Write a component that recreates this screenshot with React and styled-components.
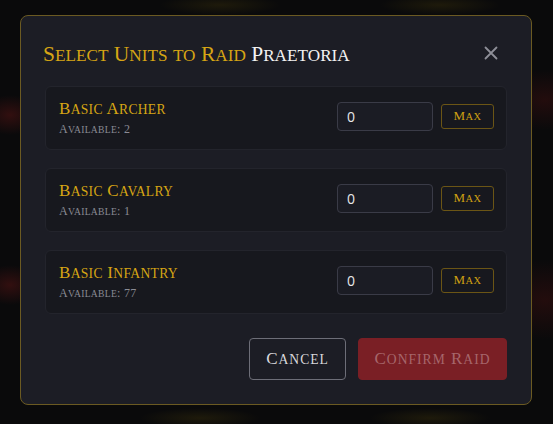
import React from "react";
import styled, { createGlobalStyle } from "styled-components";

const Global = createGlobalStyle`
  html, body { margin: 0; padding: 0; }
  body {
    background: #0a0a0b;
    font-family: "Liberation Serif", "DejaVu Serif", serif;
    width: 553px; height: 424px; overflow: hidden;
  }
`;

const Backdrop = styled.div`
  width: 553px;
  height: 424px;
  box-sizing: border-box;
  padding: 15px 21px 19px 20px;
  background:
    radial-gradient(ellipse 30px 20px at 10px 115px, rgba(90,20,20,0.5), transparent),
    radial-gradient(ellipse 30px 20px at 10px 285px, rgba(90,20,20,0.5), transparent),
    radial-gradient(ellipse 50px 30px at 545px 100px, rgba(60,15,15,0.5), transparent),
    radial-gradient(ellipse 60px 40px at 545px 300px, rgba(60,15,15,0.5), transparent),
    radial-gradient(ellipse 60px 10px at 220px 5px, rgba(60,50,10,0.4), transparent),
    radial-gradient(ellipse 60px 10px at 440px 5px, rgba(60,50,10,0.4), transparent),
    radial-gradient(ellipse 60px 10px at 200px 418px, rgba(60,50,10,0.4), transparent),
    radial-gradient(ellipse 60px 10px at 430px 418px, rgba(60,50,10,0.4), transparent),
    #0a0a0b;
`;

const Modal = styled.div`
  box-sizing: border-box;
  width: 512px;
  height: 390px;
  background: #1c1d25;
  border: 1px solid #6b5a22;
  border-radius: 8px;
  padding: 24px 24px 24px 22px;
  display: flex;
  flex-direction: column;
`;

const Header = styled.div`
  display: flex;
  align-items: center;
  justify-content: space-between;
  height: 28px;
`;

const Title = styled.h2`
  margin: 0;
  font-size: 21.5px;
  font-weight: normal;
  color: #d6a514;
  letter-spacing: 0;
  white-space: nowrap;
`;

const Place = styled.span`
  color: #f2f2f2;
`;

const Low = styled.span`
  font-size: 0.8em;
  text-transform: uppercase;
`;

function SC({ children }) {
  const parts = String(children).split(/([a-z]+)/);
  return parts.map((p, i) =>
    /^[a-z]+$/.test(p) ? <Low key={i}>{p}</Low> : <React.Fragment key={i}>{p}</React.Fragment>
  );
}

const Close = styled.button`
  background: none;
  border: none;
  padding: 0;
  width: 16px;
  height: 16px;
  display: flex;
  align-items: center;
  justify-content: center;
  margin-right: 8px;
  margin-top: -2px;
  cursor: pointer;
`;

const List = styled.div`
  margin-top: 18px;
  padding-left: 2px;
  display: flex;
  flex-direction: column;
  gap: 18px;
`;

const Row = styled.div`
  box-sizing: border-box;
  height: 64px;
  background: #17181e;
  border: 1px solid #23242c;
  border-radius: 6px;
  display: flex;
  align-items: center;
  justify-content: space-between;
  padding: 0 12px 0 13px;
`;

const Info = styled.div`
  display: flex;
  flex-direction: column;
  gap: 2px;
  margin-top: 0;
`;

const Name = styled.div`
  font-size: 17px;
  color: #d6a514;
  line-height: 20px;
  letter-spacing: 0.3px;
  white-space: nowrap;
`;

const Avail = styled.div`
  font-size: 12px;
  color: #8a8b94;
  line-height: 14px;
  letter-spacing: 0.3px;
`;

const Controls = styled.div`
  display: flex;
  align-items: center;
  gap: 8px;
  margin-top: -4px;
`;

const Qty = styled.input`
  box-sizing: border-box;
  width: 96px;
  height: 29px;
  background: #1b1c24;
  border: 1px solid #3a3b47;
  border-radius: 4px;
  color: #e8e8ea;
  font-family: "Open Sans", "DejaVu Sans", sans-serif;
  font-size: 14px;
  padding: 0 9px;
  outline: none;
`;

const Max = styled.button`
  box-sizing: border-box;
  width: 53px;
  height: 25px;
  background: transparent;
  border: 1px solid #6b5515;
  border-radius: 3px;
  color: #cfa012;
  font-family: "Liberation Serif", serif;
  font-size: 13px;
  letter-spacing: 0.4px;
  padding: 0;
  cursor: pointer;
`;

const Footer = styled.div`
  margin-top: auto;
  display: flex;
  justify-content: flex-end;
  gap: 12px;
`;

const Btn = styled.button`
  box-sizing: border-box;
  height: 42px;
  width: ${(p) => p.$w}px;
  border-radius: 4px;
  font-family: "Liberation Serif", serif;
  font-size: 17px;
  letter-spacing: 1px;
  padding: 0;
  cursor: pointer;
  background: ${(p) => (p.$primary ? "#7a1f25" : "transparent")};
  border: 1px solid ${(p) => (p.$primary ? "#7a1f25" : "#6d6e78")};
  color: ${(p) => (p.$primary ? "#a6666b" : "#d8d8dc")};
`;

const units = [
  { name: "Basic Archer", avail: 2 },
  { name: "Basic Cavalry", avail: 1 },
  { name: "Basic Infantry", avail: 77 },
];

export default function App() {
  return (
    <>
      <Global />
      <Backdrop>
        <Modal>
          <Header>
            <Title>
              <SC>Select Units to Raid</SC> <Place><SC>Praetoria</SC></Place>
            </Title>
            <Close aria-label="close">
              <svg width="14" height="14" viewBox="0 0 14 14">
                <path d="M1.5 1.5 L12.5 12.5 M12.5 1.5 L1.5 12.5" stroke="#8e8f98" strokeWidth="1.8" strokeLinecap="round" />
              </svg>
            </Close>
          </Header>
          <List>
            {units.map((u) => (
              <Row key={u.name}>
                <Info>
                  <Name><SC>{u.name}</SC></Name>
                  <Avail><SC>{`Available: ${u.avail}`}</SC></Avail>
                </Info>
                <Controls>
                  <Qty defaultValue="0" />
                  <Max><SC>Max</SC></Max>
                </Controls>
              </Row>
            ))}
          </List>
          <Footer>
            <Btn $w={97}><SC>Cancel</SC></Btn>
            <Btn $w={149} $primary><SC>Confirm Raid</SC></Btn>
          </Footer>
        </Modal>
      </Backdrop>
    </>
  );
}
